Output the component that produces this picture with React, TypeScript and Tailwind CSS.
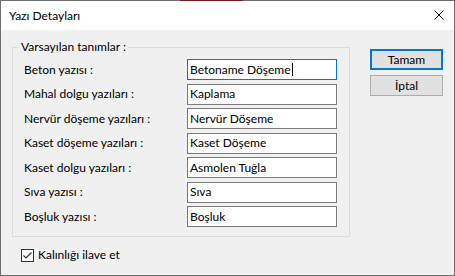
import React from 'react'

type Row = {
  label: string
  value: string
  focused?: boolean
}

const rows: Row[] = [
  { label: 'Beton yazısı :', value: 'Betoname Döşeme', focused: true },
  { label: 'Mahal dolgu yazıları :', value: 'Kaplama' },
  { label: 'Nervür döşeme yazıları :', value: 'Nervür Döşeme' },
  { label: 'Kaset döşeme yazıları :', value: 'Kaset Döşeme' },
  { label: 'Kaset dolgu yazıları :', value: 'Asmolen Tuğla' },
  { label: 'Sıva yazısı :', value: 'Sıva' },
  { label: 'Boşluk yazısı :', value: 'Boşluk' },
]

const App = () => {
  return (
    <div className="w-[455px] h-[276px] flex flex-col border-x border-b border-[#6f6f6f] bg-[#f0f0f0] text-[12px] leading-[16px] text-black font-['Lato','Liberation_Sans',sans-serif]">
      {/* top edge */}
      <div className="flex h-px">
        <div className="w-[179px] bg-[#6f6f6f]" />
        <div className="w-[63px] bg-[#7d1a1c]" />
        <div className="flex-1 bg-[#6f6f6f]" />
      </div>

      {/* Title bar */}
      <div className="flex h-[29px] items-center justify-between bg-white pl-[8px] pr-[10px]">
        <span className="text-[12px]">Yazı Detayları</span>
        <svg width="10" height="10" viewBox="0 0 10 10" className="mb-[1px]">
          <path d="M0.5 0.5 L9.5 9.5 M9.5 0.5 L0.5 9.5" stroke="#000" strokeWidth="1" />
        </svg>
      </div>

      {/* Body */}
      <div className="flex flex-col">
        <div className="flex">
          <fieldset className="ml-[11px] mt-[9px] w-[338px] h-[198px] border border-[#dcdcdc]">
            <legend className="ml-[6px] px-[2px]">Varsayılan tanımlar :</legend>
            <div className="flex flex-col gap-[3.5px] pt-[4px]">
              {rows.map((r) => (
                <div key={r.label} className="flex items-center h-[21px]">
                  <span className="w-[174px] pl-[11px]">{r.label}</span>
                  <div
                    className={
                      r.focused
                        ? 'flex h-[21px] w-[150px] items-center border border-[#0078d7] bg-white pl-[2px]'
                        : 'flex h-[21px] w-[150px] items-center border border-[#7a7a7a] bg-white pl-[2px]'
                    }
                  >
                    <span>{r.value}</span>
                    {r.focused && <span className="ml-px h-[13px] w-px bg-black" />}
                  </div>
                </div>
              ))}
            </div>
          </fieldset>

          <div className="ml-[20px] mt-[19px] flex flex-col gap-[5px]">
            <button className="flex h-[21px] w-[73px] items-center justify-center border-2 border-[#0078d7] bg-[#e1e1e1]">
              Tamam
            </button>
            <button className="flex h-[21px] w-[73px] items-center justify-center border border-[#adadad] bg-[#e1e1e1]">
              İptal
            </button>
          </div>
        </div>

        <div className="ml-[20px] mt-[10px] flex items-center gap-[4px]">
          <div className="flex h-[13px] w-[13px] items-center justify-center border border-[#333] bg-white">
            <svg width="11" height="11" viewBox="0 0 11 11">
              <path d="M1.5 5.5 L4 8 L9.5 2.5" fill="none" stroke="#333" strokeWidth="1.2" />
            </svg>
          </div>
          <span>Kalınlığı ilave et</span>
        </div>
      </div>
    </div>
  )
}

export default App
